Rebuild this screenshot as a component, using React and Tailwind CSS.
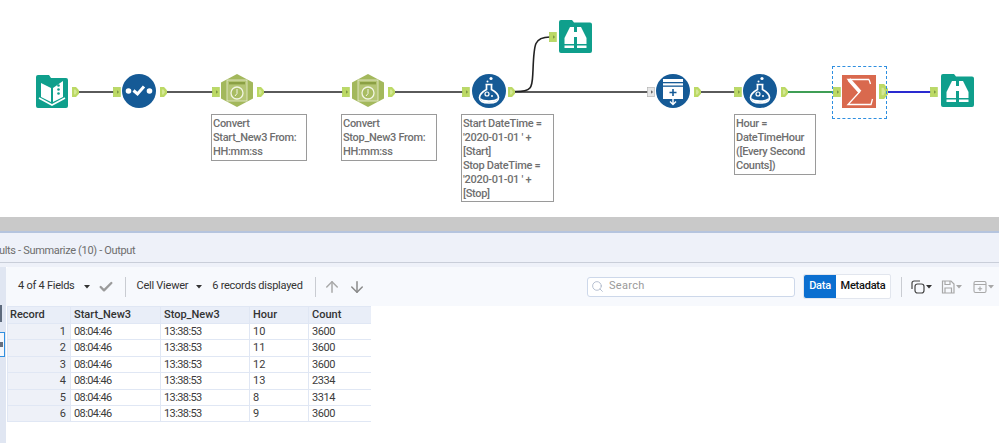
import { Search, ArrowUp, ArrowDown, Check } from 'lucide-react';

const FONT = "font-['Roboto','Noto_Sans',sans-serif]";

// anchors: the little green tabs either side of a tool
const InAnchor = ({ x, y = 87, grey }) => (
    <svg className="absolute" style={{ left: x, top: y }} width="8" height="10" viewBox="0 0 8 10">
        <rect x="0.3" y="0.3" width="7" height="9.4" fill={grey ? '#e6e6e6' : '#bcd965'} stroke={grey ? '#b0b0b0' : '#acd055'} strokeWidth="0.6" />
        <path d="M4 3.2L6.2 5L4 6.8Z" fill={grey ? '#666' : '#7f9a45'} />
    </svg>
);

const OutAnchor = ({ x, big }) => (
    <svg className="absolute" style={{ left: x, top: big ? 84 : 87 }} width={big ? 9 : 7} height={big ? 15 : 10} viewBox="0 0 7 10" preserveAspectRatio="none">
        <path d="M0 0H4L7 3.2V6.8L4 10H0Z" fill="#bcd965" />
        <path d="M2 2.5H3.5L5 5L3.5 7.5H2Z" fill="#d3e894" />
    </svg>
);

const Wire = ({ from, to, color = '#5a5a5a' }) => (
    <div className="absolute h-[2px]" style={{ left: from, top: 91, width: to - from, backgroundColor: color }} />
);

const BookIcon = () => (
    <svg className="absolute left-[36px] top-[75px]" width="32" height="33" viewBox="0 0 32 33">
        <path d="M2 0H13L15 3H30A2 2 0 0 1 32 5V31A2 2 0 0 1 30 33H2A2 2 0 0 1 0 31V2A2 2 0 0 1 2 0Z" fill="#0f9f8c" />
        <path d="M5 8L15 13V27L5 22Z" fill="#fff" />
        <path d="M17 13L27 6V22L17 27Z" fill="#fff" />
        <path d="M3 23L16 30L29 23" fill="none" stroke="#fff" strokeWidth="1.6" />
        <circle cx="22.5" cy="10.5" r="1.3" fill="#0f9f8c" />
        <circle cx="22.5" cy="14.5" r="1.3" fill="#0f9f8c" />
        <circle cx="22.5" cy="18.5" r="1.3" fill="#0f9f8c" />
    </svg>
);

const SelectIcon = () => (
    <svg className="absolute left-[122px] top-[74px]" width="34" height="34" viewBox="0 0 34 34">
        <circle cx="17" cy="17" r="17" fill="#155a96" />
        <circle cx="6.5" cy="17" r="2.8" fill="#fff" />
        <circle cx="27.5" cy="17" r="2.8" fill="#fff" />
        <path d="M11.5 16.5L15.5 20L22 12.5" fill="none" stroke="#fff" strokeWidth="3" />
    </svg>
);

const HexIcon = ({ x }) => (
    <svg className="absolute top-[74px]" style={{ left: x }} width="34" height="33" viewBox="0 0 34 33">
        <path d="M17 0L33 8.5V24.5L17 33L1 24.5V8.5Z" fill="#a3b85c" />
        <rect x="7" y="6" width="20" height="21" fill="#b4c574" stroke="#e6ecd0" strokeWidth="0.8" />
        <rect x="9" y="8" width="16" height="2.4" fill="#8ba044" />
        <circle cx="17" cy="19" r="6" fill="#a8bc62" stroke="#f2f5e4" strokeWidth="1.3" />
        <path d="M17 15V19.5L15 22" fill="none" stroke="#f2f5e4" strokeWidth="1" />
    </svg>
);

const FormulaIcon = ({ x }) => (
    <svg className="absolute top-[74px]" style={{ left: x }} width="34" height="34" viewBox="0 0 34 34">
        <circle cx="17" cy="17" r="17" fill="#155a96" />
        <circle cx="19" cy="4.5" r="1.6" fill="#fff" />
        <circle cx="15.5" cy="7.5" r="1" fill="#fff" />
        <path d="M13.5 10.5H20.5M14.5 10.5V15.5C10 18 7.5 20.5 7.5 23.5C7.5 27 11 29 17 29C23 29 26.5 27 26.5 23.5C26.5 20.5 24 18 19.5 15.5V10.5" fill="none" stroke="#fff" strokeWidth="1.7" />
        <path d="M8.5 24C11 27 23 27 25.5 24C25.5 27 22 28.5 17 28.5C12 28.5 8.5 27 8.5 24Z" fill="#fff" />
        <circle cx="15" cy="20" r="2" fill="none" stroke="#fff" strokeWidth="1.2" />
        <circle cx="20" cy="22" r="1" fill="#fff" />
    </svg>
);

const UnionIcon = () => (
    <svg className="absolute left-[656px] top-[74px]" width="34" height="34" viewBox="0 0 34 34">
        <circle cx="17" cy="17" r="17" fill="#155a96" />
        <rect x="7" y="5" width="20" height="20" fill="#fff" />
        <rect x="7" y="8" width="20" height="1.3" fill="#155a96" />
        <rect x="7" y="11.5" width="20" height="1.3" fill="#155a96" />
        <path d="M17 15V22M13.5 18.5H20.5" stroke="#155a96" strokeWidth="1.6" />
        <path d="M17 25V30.5M14 27.5L17 30.5L20 27.5" fill="none" stroke="#fff" strokeWidth="1.4" />
    </svg>
);

const BrowseIcon = ({ x, y }) => (
    <svg className="absolute" style={{ left: x, top: y }} width="33" height="33" viewBox="0 0 33 33">
        <path d="M2 0H13L15 2.5H31A2 2 0 0 1 33 4.5V31A2 2 0 0 1 31 33H2A2 2 0 0 1 0 31V2A2 2 0 0 1 2 0Z" fill="#0f9f8c" />
        <path d="M11 7H15V24H5.5V18Z" fill="#fff" />
        <path d="M22 7H18V24H27.5V18Z" fill="#fff" />
        <rect x="5.5" y="25.5" width="9.5" height="2.5" fill="#fff" />
        <rect x="18" y="25.5" width="9.5" height="2.5" fill="#fff" />
        <rect x="15" y="12" width="3" height="5" fill="#fff" />
    </svg>
);

const SumIcon = () => (
    <svg className="absolute left-[842px] top-[75px]" width="34" height="33" viewBox="0 0 34 33">
        <rect width="34" height="33" fill="#d9694e" />
        <path d="M27 4.5H6L17.5 17L6 29.5H29L30.5 24" fill="none" stroke="#fff" strokeWidth="1.3" />
        <path d="M27 4.5L28.5 9" fill="none" stroke="#fff" strokeWidth="1.3" />
        <path d="M7 4.5L18 17" fill="none" stroke="#fff" strokeWidth="3.6" />
    </svg>
);

const Note = ({ x, w, h, lines }) => (
    <div
        className={`absolute top-[114px] border border-[#9a9a9a] bg-white pl-[1px] pt-[2px] text-[11px] leading-[13.9px] tracking-[-0.3px] font-medium text-[#6f6f6f] ${FONT}`}
        style={{ left: x, width: w, height: h }}
    >
        {lines.map((l) => (
            <div key={l} className="whitespace-nowrap">{l}</div>
        ))}
    </div>
);

const Canvas = () => (
    <div className={`relative h-[217px] bg-white shrink-0 ${FONT}`}>
        <Wire from={78} to={114} />
        <Wire from={166} to={213} />
        <Wire from={263} to={343} />
        <Wire from={394} to={463} />
        <Wire from={514} to={648} />
        <Wire from={700} to={735} />
        <Wire from={787} to={834} color="#3f9e55" />
        <Wire from={887} to={931} color="#2a2ad0" />
        <svg className="absolute left-[512px] top-[30px]" width="40" height="64" viewBox="0 0 40 64">
            <path d="M2 61.5C22 62 20 56 21 40C22 14 22 7 38 7" fill="none" stroke="#222" strokeWidth="1.6" />
        </svg>

        <BookIcon />
        <OutAnchor x={72} />
        <InAnchor x={113} />
        <SelectIcon />
        <OutAnchor x={160} />
        <InAnchor x={212} />
        <HexIcon x={220} />
        <OutAnchor x={257} />
        <InAnchor x={342} />
        <HexIcon x={351} />
        <OutAnchor x={388} />
        <InAnchor x={462} />
        <FormulaIcon x={472} />
        <OutAnchor x={508} />
        <InAnchor x={549} y={32} />
        <BrowseIcon x={559} y={20} />
        <InAnchor x={647} grey />
        <UnionIcon />
        <OutAnchor x={694} />
        <InAnchor x={734} />
        <FormulaIcon x={743} />
        <OutAnchor x={781} />
        <InAnchor x={833} />
        <SumIcon />
        <OutAnchor x={879} big />
        <InAnchor x={930} />
        <BrowseIcon x={941} y={74} />

        <div className="absolute left-[832px] top-[66px] w-[55px] h-[53px] border border-dashed border-[#2f8fe0]" />

        <Note x={211} w={96} h={47} lines={['Convert', 'Start_New3 From:', 'HH:mm:ss']} />
        <Note x={341} w={96} h={47} lines={['Convert', 'Stop_New3 From:', 'HH:mm:ss']} />
        <Note x={461} w={93} h={88} lines={['Start DateTime =', "'2020-01-01 ' +", '[Start]', 'Stop DateTime =', "'2020-01-01 ' +", '[Stop]']} />
        <Note x={734} w={82} h={61} lines={['Hour =', 'DateTimeHour', '([Every Second', 'Counts])']} />
    </div>
);

const Caret = ({ className = 'text-[#333]' }) => (
    <svg className={`shrink-0 ${className}`} width="6" height="4" viewBox="0 0 6 4">
        <path d="M0 0H6L3 3.5Z" fill="currentColor" />
    </svg>
);

const Sep = () => <div className="w-px h-[20px] bg-[#c9ccd2]" />;

const Toolbar = () => (
    <div className="h-[39px] pl-[12px] pr-[5px] rounded-tl-[3px] bg-[#f7f9fd] flex items-center justify-between whitespace-nowrap text-[11px] tracking-[-0.25px] text-[#333]">
        <div className="flex items-center">
            <span>4 of 4 Fields</span>
            <Caret className="ml-[9px]" />
            <Check className="ml-[8px] text-[#9b9b9b]" size={16} strokeWidth={3.5} />
            <div className="ml-[11px]"><Sep /></div>
            <span className="ml-[11px]">Cell Viewer</span>
            <Caret className="ml-[8px]" />
            <span className="ml-[10px]">6 records displayed</span>
            <div className="ml-[12px]"><Sep /></div>
            <ArrowUp className="ml-[7px] text-[#a9a9a9]" size={18} strokeWidth={2} />
            <ArrowDown className="ml-[7px] text-[#8a8a8a]" size={18} strokeWidth={2} />
        </div>
        <div className="flex items-center">
            <div className="w-[208px] h-[20px] rounded-[3px] border border-[#cdd8ea] bg-white flex items-center">
                <Search className="ml-[3px] text-[#a7b3c6]" size={13} strokeWidth={1.5} />
                <span className="ml-[5px] text-[#9a9a9a] tracking-[0.3px]">Search</span>
            </div>
            <div className="ml-[8px] flex h-[25px] border border-[#e2e6ee] rounded-[2px] bg-white">
                <div className="w-[32px] bg-[#0b6fd0] text-white font-medium flex items-center justify-center rounded-l-[2px]">Data</div>
                <div className="w-[54px] text-[#111] font-medium flex items-center justify-center">Metadata</div>
            </div>
            <div className="ml-[10px]"><Sep /></div>
            <svg className="ml-[9px]" width="14" height="14" viewBox="0 0 14 14" fill="none" stroke="#444" strokeWidth="1.2">
                <path d="M1 9V3A2 2 0 0 1 3 1H9" />
                <rect x="4" y="4" width="9" height="9" rx="2.5" />
            </svg>
            <Caret className="ml-[1px]" />
            <svg className="ml-[9px]" width="14" height="14" viewBox="0 0 14 14" fill="none" stroke="#a8a8a8" strokeWidth="1.2">
                <path d="M1.5 1H10L13 4V13H1.5Z" />
                <path d="M4 1V4.5H9V1M4 13V8H10.5V13" />
            </svg>
            <Caret className="ml-[1px] text-[#a8a8a8]" />
            <svg className="ml-[11px]" width="14" height="14" viewBox="0 0 14 14" fill="none" stroke="#a8a8a8" strokeWidth="1.1">
                <rect x="1" y="1.5" width="12" height="11" rx="1.5" />
                <path d="M1 4.5H13M7 6.5V11M4.8 8.7H9.2" />
            </svg>
            <Caret className="ml-[1px] text-[#a8a8a8]" />
        </div>
    </div>
);

const ROWS = [
    [1, '08:04:46', '13:38:53', 10, 3600],
    [2, '08:04:46', '13:38:53', 11, 3600],
    [3, '08:04:46', '13:38:53', 12, 3600],
    [4, '08:04:46', '13:38:53', 13, 2334],
    [5, '08:04:46', '13:38:53', 8, 3314],
    [6, '08:04:46', '13:38:53', 9, 3600],
];

const HEADERS = ['Record', 'Start_New3', 'Stop_New3', 'Hour', 'Count'];

const ResultTable = () => (
    <div className="ml-[1px] w-[364px] grid grid-cols-[62px_89px_88px_58px_62px] gap-[1px] p-[1px] bg-[#e0e7f4] text-[11px] leading-[15.4px] text-[#3c3c3c]">
        {HEADERS.map((h, i) => (
            <div key={h} className={`bg-[#e9eef8] h-[16px] font-medium text-[#333] ${i === 0 ? 'pl-[2px]' : 'pl-[3px]'}`}>{h}</div>
        ))}
        {ROWS.map((r) => (
            <div key={r[0]} className="contents">
                <div className="bg-[#eef1f8] pr-[4px] text-right">{r[0]}</div>
                <div className="bg-white pl-[3px] tracking-[-0.6px]">{r[1]}</div>
                <div className="bg-white pl-[3px] tracking-[-0.6px]">{r[2]}</div>
                <div className="bg-white pl-[3px]">{r[3]}</div>
                <div className="bg-white pl-[3px] tracking-[-0.4px]">{r[4]}</div>
            </div>
        ))}
    </div>
);

const Results = () => (
    <div className={`flex-1 flex flex-col bg-white ${FONT}`}>
        <div className="h-[2px] bg-[#b5c4de]" />
        <div className="h-[30px] pt-[7px] bg-[#eef1f9] border-b border-[#c9ced9] flex items-center text-[11px] tracking-[-0.33px] text-[#6d6d6d]">
            <span className="-ml-[1px]">ults - Summarize (10) - Output</span>
        </div>
        <div className="h-[4px] bg-[#eef1f9]" />
        <div className="flex-1 flex">
            <div className="w-[6px] bg-[#e0e6f2] flex flex-col">
                <div className="mt-[38px] h-[17px] w-[2px] bg-[#5d6a7c]" />
                <div className="mt-[10px] h-[25px] w-[5px] border border-l-0 border-[#2f8fe0] bg-[#f4f7fc] flex items-center">
                    <div className="w-[3px] h-[5px] bg-[#66707e]" />
                </div>
            </div>
            <div className="flex-1">
                <Toolbar />
                <ResultTable />
            </div>
        </div>
    </div>
);

const App = () => (
    <div className="w-[999px] h-[443px] overflow-hidden flex flex-col bg-white">
        <Canvas />
        <div className="h-[14px] bg-[#c9c9c9] shrink-0" />
        <Results />
    </div>
);

export default App;
